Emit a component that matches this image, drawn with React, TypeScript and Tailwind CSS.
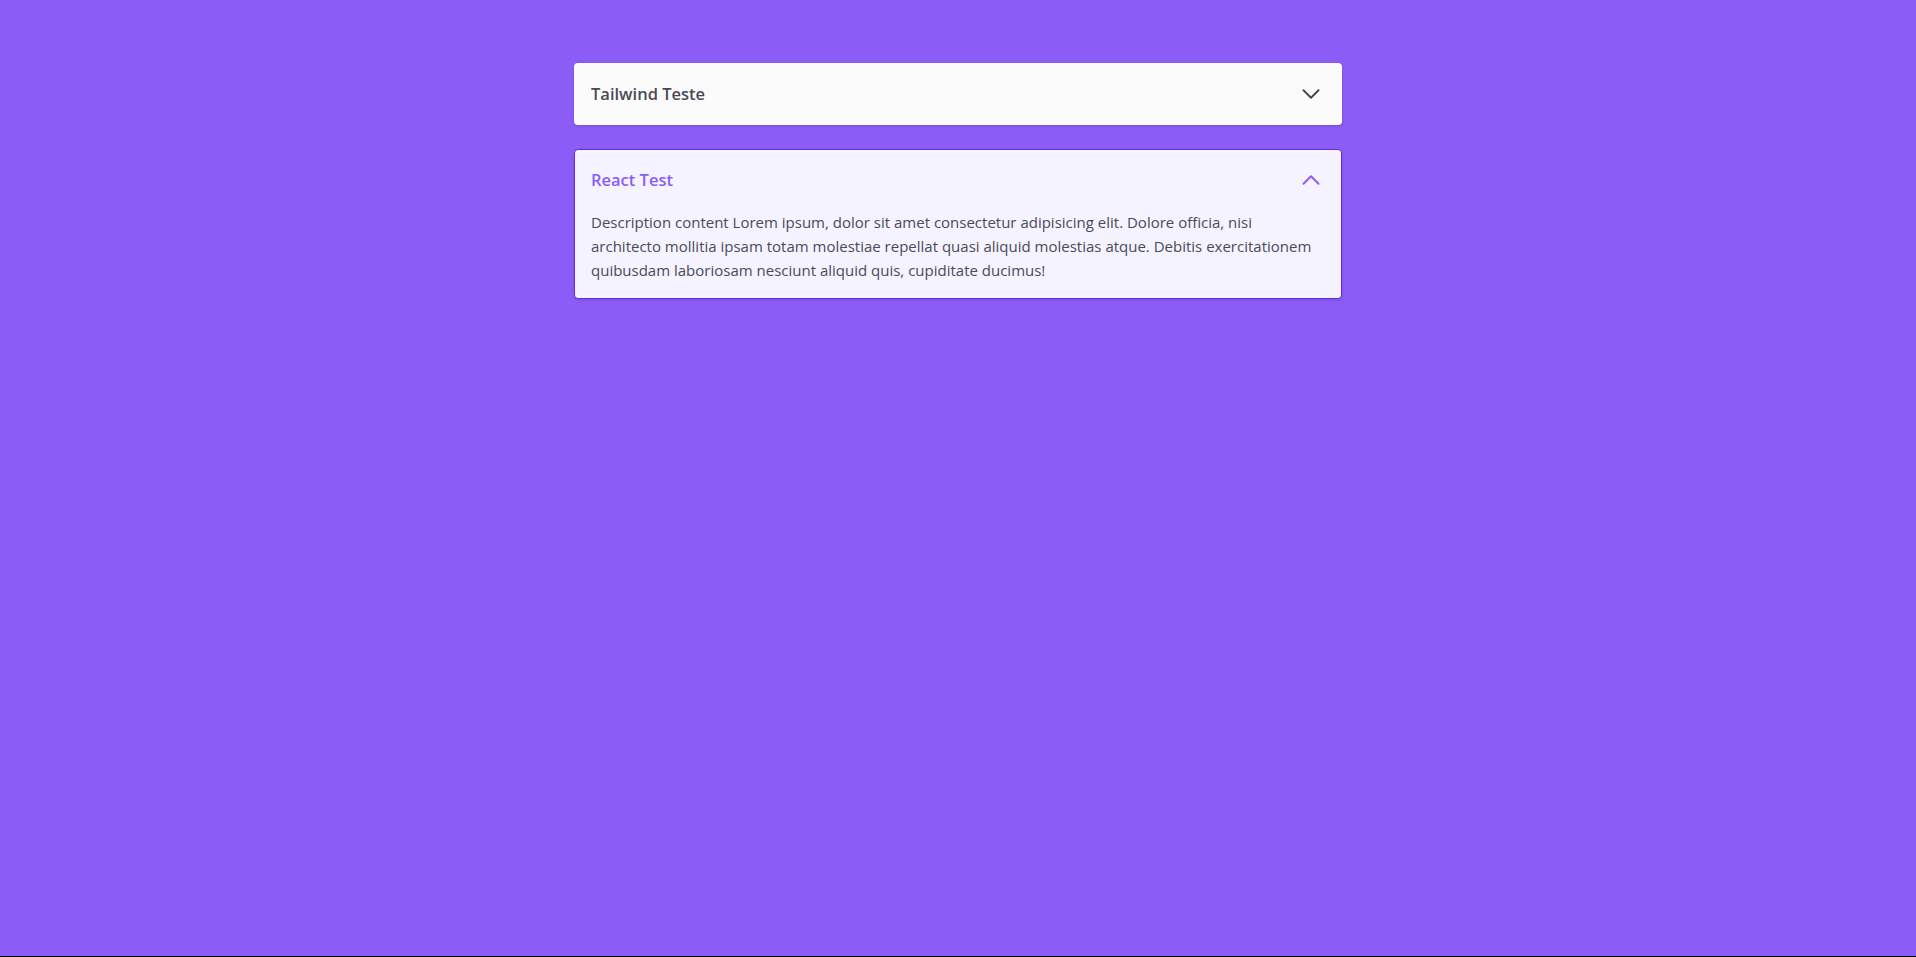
import { useState } from 'react';

const items = [
    {
        title: "Tailwind Teste",
        content: "Description content Lorem ipsum, dolor sit amet consectetur adipisicing elit. Dolore officia, nisi architecto mollitia ipsam totam molestiae repellat quasi aliquid molestias atque. Debitis exercitationem quibusdam laboriosam nesciunt aliquid quis, cupiditate ducimus!"
    },
    {
        title: "React Test",
        content: "Description content Lorem ipsum, dolor sit amet consectetur adipisicing elit. Dolore officia, nisi architecto mollitia ipsam totam molestiae repellat quasi aliquid molestias atque. Debitis exercitationem quibusdam laboriosam nesciunt aliquid quis, cupiditate ducimus!"
    }
];

function Chevron({ up }: { up: boolean }) {
    return (
        <svg xmlns="http://www.w3.org/2000/svg" fill="none" viewBox="0 0 24 24" strokeWidth={2} stroke="currentColor" className="w-6 h-6">
            {up ? (
                <path strokeLinecap="round" strokeLinejoin="round" d="m4.5 15.75 7.5-7.5 7.5 7.5" />
            ) : (
                <path strokeLinecap="round" strokeLinejoin="round" d="m19.5 8.25-7.5 7.5-7.5-7.5" />
            )}
        </svg>
    );
}

export default function App() {
    const [open, setOpen] = useState<number | null>(1);

    return (
        <div className="bg-black h-[957px]">
            <div className="bg-[#8b5cf6] h-[956px] pt-[63px] font-['Open_Sans',sans-serif]">
                <div className="w-[768px] mx-auto flex flex-col gap-6">
                    {items.map((item, index) => {
                        const isOpen = open === index;
                        return (
                            <div
                                key={index}
                                className={`rounded-sm shadow-sm ${isOpen ? 'bg-[#f5f3ff] border border-[#6d28d9]' : 'bg-[#fbfbfc] border border-transparent'}`}
                            >
                                <button
                                    onClick={() => setOpen(isOpen ? null : index)}
                                    className="w-full flex items-center justify-between pl-4 pr-[18px] h-[60px] text-left"
                                >
                                    <span className={`text-[16.5px] font-semibold ${isOpen ? 'text-[#8b5cf6]' : 'text-[#4a4a55]'}`}>
                                        {item.title}
                                    </span>
                                    <span className={isOpen ? 'text-[#8b5cf6]' : 'text-[#4a4a55]'}>
                                        <Chevron up={isOpen} />
                                    </span>
                                </button>
                                {isOpen && (
                                    <p className="px-4 pb-4 text-[15px] leading-6 text-[#4b4b55]">
                                        {item.content}
                                    </p>
                                )}
                            </div>
                        );
                    })}
                </div>
            </div>
        </div>
    );
}
